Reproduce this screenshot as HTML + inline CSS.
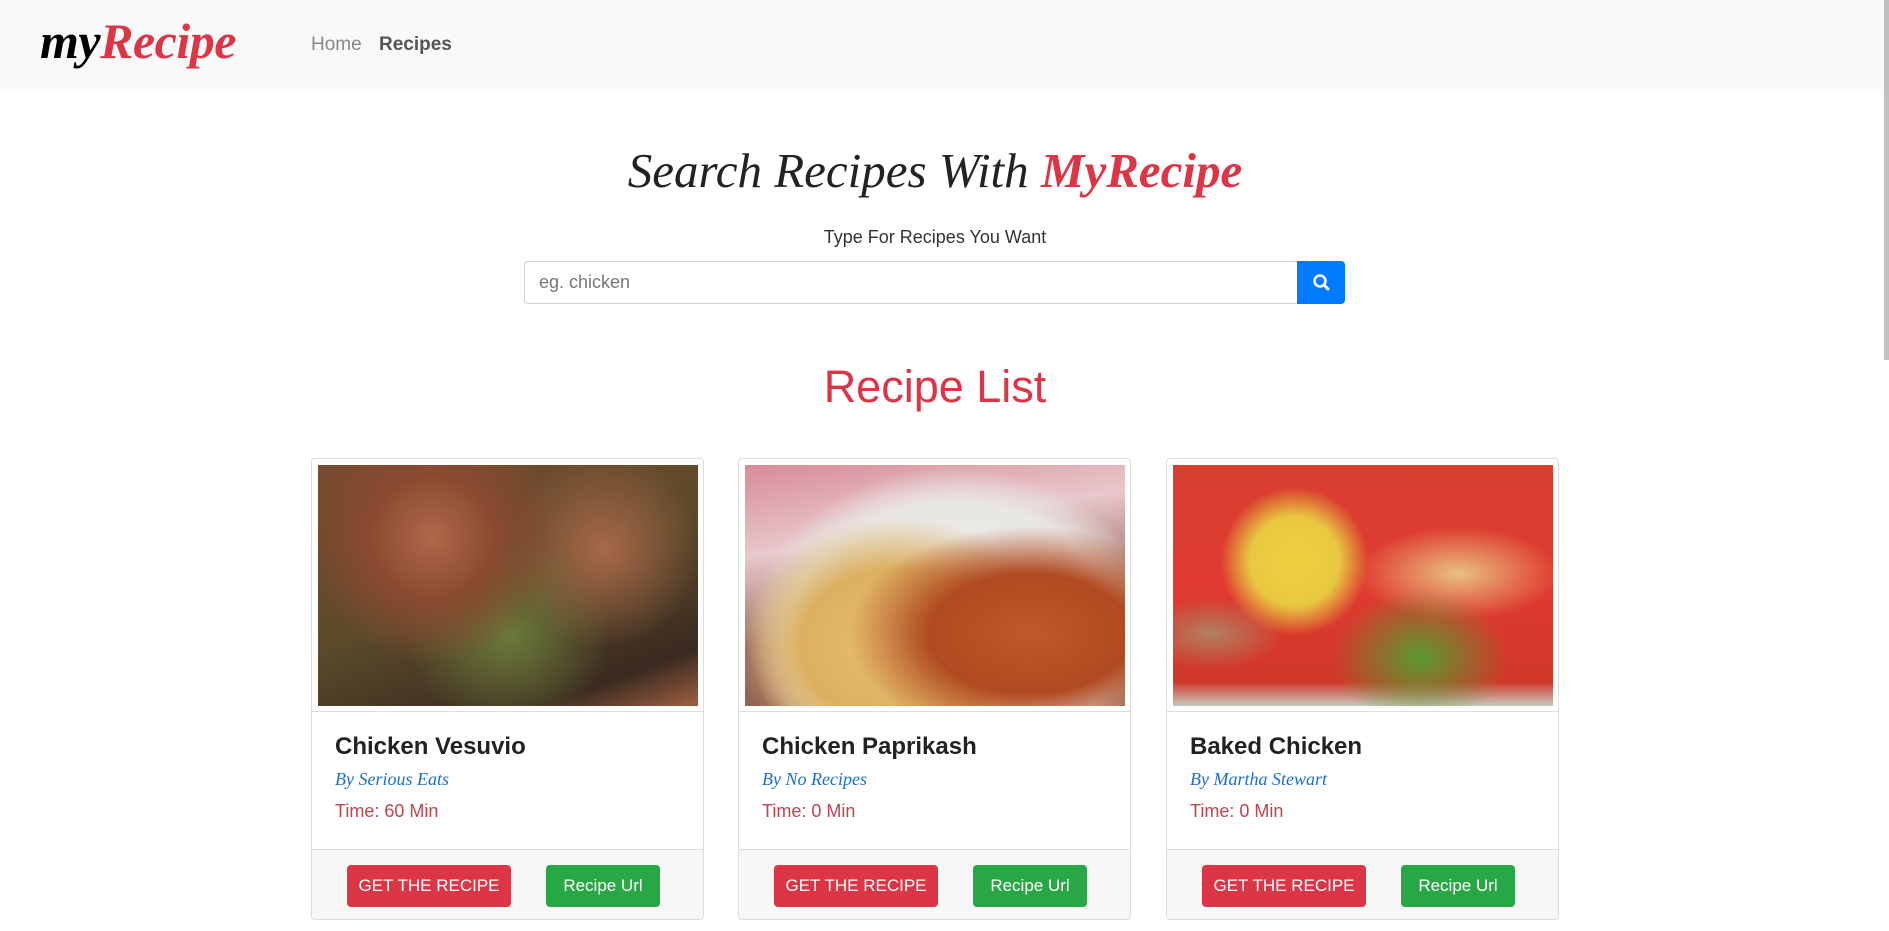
<!DOCTYPE html>
<html><head><meta charset="utf-8"><style>
*{box-sizing:border-box;margin:0;padding:0}
body{width:1889px;height:931px;overflow:hidden;background:#fff;font-family:"Liberation Sans",sans-serif;position:relative}
.nav{position:absolute;left:0;top:0;width:1889px;height:89px;background:#f8f9fa}
.logo{position:absolute;left:40px;top:12px;font:italic bold 50px "Liberation Serif",serif;letter-spacing:-0.5px}
.logo .r{color:#dc3545}
.nl{position:absolute;top:34px;font-size:19px;color:#888}
h1{position:absolute;left:0;width:1870px;top:142px;text-align:center;font:italic 49px "Liberation Serif",serif;color:#222}
h1 span{color:#dc3545;font-weight:bold}
.sub{position:absolute;left:0;width:1870px;top:227px;text-align:center;font-size:18px;color:#333}
.inp{position:absolute;left:524px;top:261px;width:774px;height:43px;border:1px solid #ced4da;border-radius:4px 0 0 4px;padding:10px 14px;font-size:18px;color:#777}
.sb{position:absolute;left:1297px;top:261px;width:48px;height:43px;background:#007bff;border-radius:0 4px 4px 0}
h2{position:absolute;left:0;width:1870px;top:361px;text-align:center;font-weight:normal;font-size:45px;color:#dc3545}
.card{position:absolute;top:458px;width:393px;height:462px;border:1px solid #ddd;border-radius:4px;background:#fff;overflow:hidden}
.img{position:absolute;left:6px;top:6px;width:380px;height:241px}
.imgb{position:absolute;left:0;top:0;width:391px;height:253px;border-bottom:1px solid #ddd}
.t{position:absolute;left:23px;top:274px;font-size:24px;font-weight:bold;color:#222}
.by{position:absolute;left:23px;top:310px;font:italic 18px "Liberation Serif",serif;color:#1a6fd0}
.tm{position:absolute;left:23px;top:342px;font-size:18px;color:#c0444f}
.ft{position:absolute;left:0;top:390px;width:391px;height:72px;background:#f7f7f7;border-top:1px solid #ddd}
.b1{position:absolute;left:35px;top:15px;width:164px;height:42px;background:#dc3545;color:#fff;border-radius:4px;font-size:17px;text-align:center;line-height:42px}
.b2{position:absolute;left:234px;top:15px;width:114px;height:42px;background:#28a745;color:#fff;border-radius:4px;font-size:17px;text-align:center;line-height:42px}
.scr{position:absolute;right:0;top:0;width:5px;height:360px;background:#c1c1c1}
</style></head><body>
<div class="nav">
<div class="logo">my<span class="r">Recipe</span></div>
<div class="nl" style="left:311px">Home</div>
<div class="nl" style="left:379px;font-weight:bold;color:#555">Recipes</div>
</div>
<div class="scr"></div>
<h1>Search Recipes With <span>MyRecipe</span></h1>
<div class="sub">Type For Recipes You Want</div>
<div class="inp">eg. chicken</div>
<div class="sb"><svg width="48" height="43" viewBox="0 0 48 43"><circle cx="23" cy="20" r="5.5" fill="none" stroke="#fff" stroke-width="2.5"/><line x1="27" y1="24" x2="31" y2="28" stroke="#fff" stroke-width="3" stroke-linecap="round"/></svg></div>
<h2>Recipe List</h2>

<div class="card" style="left:311px"><div class="imgb"></div>
<div class="img" style="background:radial-gradient(circle at 30% 30%,#b0684a 0,#8a4a30 20%,transparent 40%),radial-gradient(circle at 75% 35%,#a86848 0,transparent 30%),radial-gradient(circle at 50% 70%,#6a7a3a 0,transparent 40%),linear-gradient(160deg,#7a4a30,#5a4a2a 50%,#3a2a20 85%,#a06040)"></div>
<div class="t">Chicken Vesuvio</div><div class="by">By Serious Eats</div><div class="tm">Time: 60 Min</div>
<div class="ft"><div class="b1">GET THE RECIPE</div><div class="b2">Recipe Url</div></div></div>

<div class="card" style="left:738px"><div class="imgb"></div>
<div class="img" style="background:radial-gradient(ellipse at 75% 70%,#c05a2a 0,#b04a20 25%,transparent 45%),radial-gradient(ellipse at 40% 75%,#e8c070 0,#dcb060 30%,transparent 50%),radial-gradient(ellipse at 55% 70%,#f0f0ee 0,#e8e6e2 55%,transparent 70%),linear-gradient(170deg,#d88a98,#e8c8cc 30%,#9a6a60 60%,#8a5a48)"></div>
<div class="t">Chicken Paprikash</div><div class="by">By No Recipes</div><div class="tm">Time: 0 Min</div>
<div class="ft"><div class="b1">GET THE RECIPE</div><div class="b2">Recipe Url</div></div></div>

<div class="card" style="left:1166px"><div class="imgb"></div>
<div class="img" style="background:radial-gradient(circle at 32% 40%,#f0d040 0,#e8c840 15%,transparent 25%),radial-gradient(ellipse at 65% 80%,#5a9a30 0,transparent 25%),radial-gradient(ellipse at 75% 45%,#e8c080 0,transparent 25%),radial-gradient(ellipse at 10% 70%,#b08060 0,transparent 15%),linear-gradient(180deg,#d84030,#e03a30 50%,#d03828 90%,#c8c8c0)"></div>
<div class="t">Baked Chicken</div><div class="by">By Martha Stewart</div><div class="tm">Time: 0 Min</div>
<div class="ft"><div class="b1">GET THE RECIPE</div><div class="b2">Recipe Url</div></div></div>
</body></html>
